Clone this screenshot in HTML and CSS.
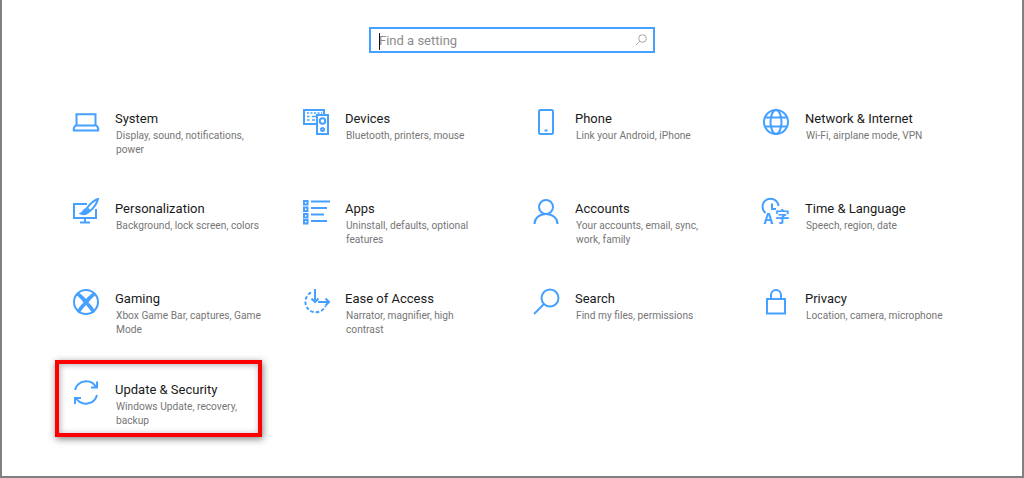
FILE: index.html
```html
<!DOCTYPE html>
<html lang="en">
<head>
  <meta charset="UTF-8" />
  <title>Windows Settings</title>
  <link rel="stylesheet" href="styles.css">
</head>
<body>

<div class="window">
  <div class="search-row">
    <div class="search-box">
      <span class="placeholder">Find a setting</span>
      <svg class="search-icon" width="12" height="12" viewBox="0 0 12 12"><circle cx="7.5" cy="4.5" r="3.8"/><path d="M4.8 7.2 L0.8 11.2"/></svg>
    </div>
  </div>

  <div class="tiles">
    <div class="tile">
      <svg class="icon" width="28" height="28" viewBox="0 0 28 28"><path d="M4.500 17.500V6.200h19v11.300"/><path d="M1.800 22.500h24.400c.4-2-.6-4-2-5H3.800c-1.400 1-2.400 3-2 5z"/></svg>
      <div class="tile-text">
        <h3>System</h3>
        <p>Display, sound, notifications, power</p>
      </div>
    </div>

    <div class="tile">
      <svg class="icon" width="28" height="28" viewBox="0 0 28 28"><path d="M15 16H2V2h20v4"/><path d="M5 5h2M8.500 5h2M12 5h2M15.500 5h2M19 5h1M5 8.500h2.500M10 8.500h4M5 12h2.500M10 12h3" stroke-width="1.500"/><rect x="15" y="7" width="11" height="19"/><circle cx="20.500" cy="13" r="2.800"/><circle cx="20.500" cy="21.500" r="1.500"/></svg>
      <div class="tile-text">
        <h3>Devices</h3>
        <p>Bluetooth, printers, mouse</p>
      </div>
    </div>

    <div class="tile">
      <svg class="icon" width="28" height="28" viewBox="0 0 28 28"><rect x="7" y="2" width="14" height="24" rx="1.500"/><path d="M12.500 22.500h3"/></svg>
      <div class="tile-text">
        <h3>Phone</h3>
        <p>Link your Android, iPhone</p>
      </div>
    </div>

    <div class="tile">
      <svg class="icon" width="28" height="28" viewBox="0 0 28 28"><circle cx="14" cy="14" r="12"/><ellipse cx="14" cy="14" rx="5.500" ry="12"/><path d="M3.500 9.500h21M3.500 18.500h21"/></svg>
      <div class="tile-text">
        <h3>Network &amp; Internet</h3>
        <p>Wi-Fi, airplane mode, VPN</p>
      </div>
    </div>

    <div class="tile">
      <svg class="icon" width="28" height="28" viewBox="0 0 28 28"><path d="M15 6H2v14h22v-9"/><path d="M13 20v4M8 24.500h10"/><path d="M26 1c-3 1-8 5-11 9l3 3c3.500-3 7-8 8-12z"/><path class="solid" d="M14.500 11c-3 0-2.500 3-5.500 4.500 3 1.500 7.500 0 8.500-2.500"/></svg>
      <div class="tile-text">
        <h3>Personalization</h3>
        <p>Background, lock screen, colors</p>
      </div>
    </div>

    <div class="tile">
      <svg class="icon" width="28" height="28" viewBox="0 0 28 28"><rect x="2" y="3" width="3.500" height="3.500"/><rect x="2" y="9.500" width="3.500" height="3.500"/><rect x="2" y="16" width="3.500" height="3.500"/><rect x="2" y="22" width="3.500" height="3.500"/><path d="M9 3.500h19M9 10h16M9 16.500h13M9 23h16"/></svg>
      <div class="tile-text">
        <h3>Apps</h3>
        <p>Uninstall, defaults, optional features</p>
      </div>
    </div>

    <div class="tile">
      <svg class="icon" width="28" height="28" viewBox="0 0 28 28"><circle cx="14" cy="9" r="7"/><path d="M2.500 26c0-6 5-10 11.500-10s11.500 4 11.500 10"/></svg>
      <div class="tile-text">
        <h3>Accounts</h3>
        <p>Your accounts, email, sync, work, family</p>
      </div>
    </div>

    <div class="tile">
      <svg class="icon icon-open" width="28" height="28" viewBox="0 0 28 28"><path d="M3.500 15a8 8 0 1 1 13-7"/><path d="M10 5.500v5.500h4"/><text class="glyph" x="1.500" y="26" font-size="15">A</text><text class="glyph" x="13" y="24" font-size="14.500">字</text></svg>
      <div class="tile-text">
        <h3>Time &amp; Language</h3>
        <p>Speech, region, date</p>
      </div>
    </div>

    <div class="tile">
      <svg class="icon" width="28" height="28" viewBox="0 0 28 28"><circle cx="14" cy="14" r="12"/><path class="solid" d="M6.500 4.500C9 6 12 8.500 14 11c2-2.500 5-5 7.500-6.500 1.500 1 2 1.500 2.500 2.500-3 2-5.500 4.500-7.500 7.500 3 3 5.500 6 6.500 9-1 1-1.500 1.500-2.500 2-2-3.500-4.500-6.500-6.500-8.500-2 2-4.500 5-6.500 8.500-1-.5-1.500-1-2.500-2 1-3 3.500-6 6.500-9-2-3-4.500-5.500-7.500-7.500 .5-1 1-1.500 2.500-2.500z" stroke="none"/></svg>
      <div class="tile-text">
        <h3>Gaming</h3>
        <p>Xbox Game Bar, captures, Game Mode</p>
      </div>
    </div>

    <div class="tile">
      <svg class="icon" width="28" height="28" viewBox="0 0 28 28"><path d="M9 4.500A10.500 10.500 0 1 0 23.500 18" stroke-dasharray="3.500 2"/><path d="M13 1v13"/><path d="M9.500 10.500 13 14l3.500-3.500"/><path d="M16 14h11"/><path d="M23.500 10.500 27 14l-3.500 3.500"/></svg>
      <div class="tile-text">
        <h3>Ease of Access</h3>
        <p>Narrator, magnifier, high contrast</p>
      </div>
    </div>

    <div class="tile">
      <svg class="icon" width="28" height="28" viewBox="0 0 28 28"><circle cx="18" cy="10" r="8.500"/><path d="M12 16 2 26"/></svg>
      <div class="tile-text">
        <h3>Search</h3>
        <p>Find my files, permissions</p>
      </div>
    </div>

    <div class="tile">
      <svg class="icon" width="28" height="28" viewBox="0 0 28 28"><rect x="5" y="11" width="18" height="14.500"/><path d="M9 11V7a5 5 0 0 1 10 0v4"/></svg>
      <div class="tile-text">
        <h3>Privacy</h3>
        <p>Location, camera, microphone</p>
      </div>
    </div>

    <div class="tile">
      <svg class="icon" width="28" height="28" viewBox="0 0 28 28"><path d="M3 11A11.500 11.500 0 0 1 24 8"/><path d="M25 2.500V8.500H19"/><path d="M25 16A11.500 11.500 0 0 1 4 19"/><path d="M3 25V19H9"/></svg>
      <div class="tile-text">
        <h3>Update &amp; Security</h3>
        <p>Windows Update, recovery, backup</p>
      </div>
      <span class="highlight"></span>
    </div>
  </div>
</div>

</body>
</html>
```

FILE: styles.css
```css
html, body {
  margin: 0;
  height: 100%;
  background: #fff;
  overflow: hidden;
}
.window {
  box-sizing: border-box;
  width: 1024px;
  height: 478px;
  border-left: 2px solid #808080;
  border-right: 2px solid #808080;
  border-bottom: 2px solid #808080;
  font-family: Roboto, "Open Sans", sans-serif;
}
.search-row {
  display: flex;
  justify-content: center;
  padding-top: 27px;
}
.search-box {
  box-sizing: border-box;
  width: 286px;
  height: 26px;
  border: 2px solid #45a0ff;
  display: flex;
  align-items: center;
  justify-content: space-between;
  padding: 0 6px 0 8px;
}
.placeholder {
  position: relative;
  font-size: 13px;
  color: #8c8c8c;
}
.placeholder::before {
  content: "";
  position: absolute;
  left: 0;
  top: 0;
  width: 1px;
  height: 17px;
  background: #111;
}
.search-icon {
  fill: none;
  stroke: #a6a6a6;
  stroke-width: 1;
}
.tiles {
  display: grid;
  grid-template-columns: repeat(4, 230px);
  grid-auto-rows: 90.2px;
  padding: 55px 0 0 70px;
}
.tile {
  position: relative;
  display: flex;
  gap: 15px;
}
.icon {
  flex: none;
  fill: none;
  stroke: #45a0ff;
  stroke-width: 2;
}
.icon-open {
  overflow: visible;
}
.icon .solid {
  fill: #45a0ff;
}
.icon .glyph {
  fill: #45a0ff;
  stroke: none;
  font-family: "Noto Sans CJK SC", "Open Sans", sans-serif;
  font-weight: 700;
}
.tile-text {
  width: 148px;
  padding-top: 1px;
}
.tile-text h3 {
  margin: 0;
  font-size: 13px;
  font-weight: 400;
  line-height: 20px;
  color: #1a1a1a;
}
.tile-text p {
  margin: 0;
  padding-left: 1px;
  font-size: 10.2px;
  line-height: 14px;
  color: #767676;
}
.highlight {
  position: absolute;
  left: -17px;
  top: -19px;
  width: 199px;
  height: 69px;
  border: 4px solid #f00;
  box-shadow: 1px 2px 7px rgba(0, 0, 0, 0.5), inset 1px 1px 6px rgba(0, 0, 0, 0.3);
}
```
